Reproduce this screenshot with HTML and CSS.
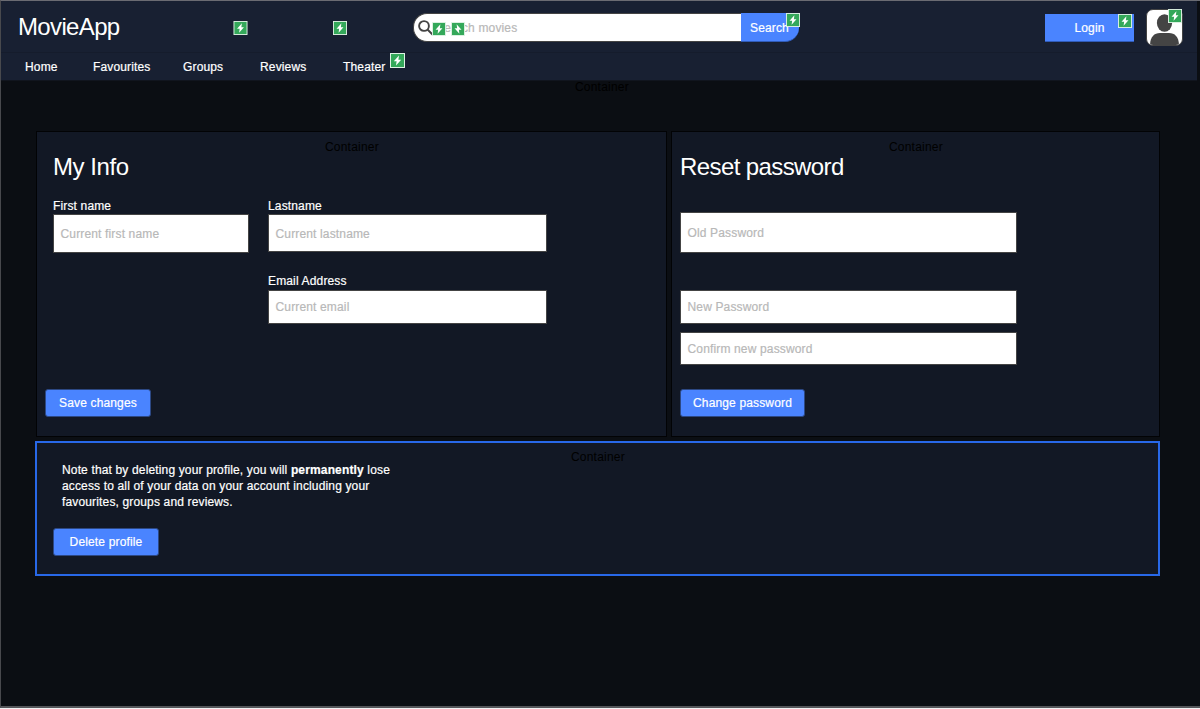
FILE: index.html
```html
<!DOCTYPE html>
<html lang="en">
<head>
<meta charset="utf-8">
<title>MovieApp</title>
<link rel="stylesheet" href="styles.css">
</head>
<body>
<svg class="defs" width="0" height="0">
  <symbol id="bolt" viewBox="0 0 15 15">
    <rect x="0.5" y="0.5" width="14" height="14" fill="#34a85a" stroke="#dff3e5"/>
    <path d="M9 2.4 3.8 8.2h2.8L6 12.6 11.2 6.8H8.4z" fill="#fff"/>
  </symbol>
</svg>
<div class="page">
  <header class="header">
    <div class="topbar">
      <div class="logo">MovieApp</div>
      <div class="search">
        <div class="search-field">
          <svg class="search-icon" viewBox="0 0 16 16"><circle cx="6" cy="6" r="4.9"/><path d="M9.5 9.5 15 15"/></svg>
          <span class="placeholder">Search movies</span>
          <svg class="badge b-field1"><use href="#bolt"/></svg>
          <svg class="badge b-field2"><use href="#bolt"/></svg>
        </div>
        <div class="search-button">Search<svg class="badge b-search"><use href="#bolt"/></svg></div>
      </div>
      <div class="login">Login<svg class="badge b-login"><use href="#bolt"/></svg></div>
      <div class="avatar">
        <svg viewBox="0 0 37 37" width="37" height="37">
          <defs><clipPath id="frame"><rect x="1" y="1" width="35" height="35" rx="6"/></clipPath></defs>
          <rect x="0.5" y="0.5" width="36" height="36" rx="6.5" fill="#fff" stroke="#444"/>
          <g clip-path="url(#frame)" fill="#444"><ellipse cx="18.5" cy="14" rx="7.6" ry="8.8"/><path d="M4 37c0-9 4-13 10-13h9c6 0 10 4 10 13z"/></g>
        </svg>
        <svg class="badge b-avatar"><use href="#bolt"/></svg>
      </div>
      <svg class="badge b-free1"><use href="#bolt"/></svg>
      <svg class="badge b-free2"><use href="#bolt"/></svg>
    </div>
    <nav class="nav">
      <a class="home">Home</a><a class="favourites">Favourites</a><a class="groups">Groups</a><a class="reviews">Reviews</a><a class="theater">Theater<svg class="badge b-theater"><use href="#bolt"/></svg></a>
    </nav>
  </header>
  <main class="main">
    <div class="tag tag-main">Container</div>
    <div class="panels">
      <section class="panel info">
        <div class="tag tag-info">Container</div>
        <h2>My Info</h2>
        <div class="columns">
          <div class="col-first">
            <label>First name</label>
            <div class="input h-first">Current first name</div>
          </div>
          <div class="col-last">
            <label>Lastname</label>
            <div class="input h-last">Current lastname</div>
            <label class="label-email">Email Address</label>
            <div class="input h-email">Current email</div>
          </div>
        </div>
        <div class="button save">Save changes</div>
      </section>
      <section class="panel reset">
        <div class="tag tag-reset">Container</div>
        <h2>Reset password</h2>
        <div class="input h-old">Old Password</div>
        <div class="input h-new">New Password</div>
        <div class="input h-confirm">Confirm new password</div>
        <div class="button change">Change password</div>
      </section>
    </div>
    <section class="danger">
      <div class="tag tag-danger">Container</div>
      <p>Note that by deleting your profile, you will <b>permanently</b> lose<br>access to all of your data on your account including your<br>favourites, groups and reviews.</p>
      <div class="button delete">Delete profile</div>
    </section>
  </main>
</div>
</body>
</html>
```
FILE: styles.css
```css
* { box-sizing: border-box; }
body { margin: 0; background: #f1f1f3; font: 12px/16px "Liberation Sans", Arial, sans-serif; color: #fff; letter-spacing: 0.15px; -webkit-text-stroke: 0.2px; overflow: hidden; }
.defs { position: absolute; }
.page { height: 708px; border-left: 1px solid #48494d; border-top: 1px solid #6a6b72; border-bottom: 2px solid #55565a; background: #0b0e13; }
.header { width: 1196px; height: 80px; background: #182032; border-bottom: 1px solid #11151e; }
.topbar { position: relative; display: flex; height: 52px; border-bottom: 1px solid #151c2c; }
.logo { width: 412px; padding: 12px 0 0 17px; font-size: 24px; line-height: 28px; letter-spacing: -0.65px; -webkit-text-stroke: 0; }
.search { display: flex; width: 386px; height: 29px; margin-top: 12px; line-height: 28px; }
.search-field { position: relative; display: flex; width: 328px; padding-left: 22px; background: #fff; border: 1px solid #444; border-right: 0; border-radius: 14px 0 0 14px; color: #b8b8b8; }
.search-icon { position: absolute; left: 4px; top: 6px; width: 16px; height: 16px; fill: none; stroke: #444; stroke-width: 1.9; }
.search-button { position: relative; width: 58px; padding-left: 9px; line-height: 30px; background: #4a84ff; border-bottom: 1px solid #315cb8; border-radius: 0 0 14px 0; }
.login { position: relative; width: 89px; height: 28px; margin: 13px 0 0 246px; line-height: 28px; text-align: center; background: #4a84ff; border-bottom: 1px solid #315cb8; }
.avatar { position: relative; width: 37px; height: 37px; margin: 8px 0 0 12px; }
.badge { position: absolute; width: 14px; height: 14px; }
.b-field1 { left: 18px; top: 8px; }
.b-field2 { left: 37px; top: 8px; transform: scaleX(-1); }
.b-search { left: 45px; top: 0; }
.b-login { right: 2px; top: 0; }
.b-avatar { left: 22px; top: 0; }
.b-free1 { left: 232px; top: 20px; width: 15px; }
.b-free2 { left: 332px; top: 20px; }
.b-theater { left: 47px; top: -6px; width: 15px; height: 15px; }
.nav { display: flex; padding: 6px 0 0 24px; }
.nav a { position: relative; }
.home { width: 68px; }
.favourites { width: 90px; }
.groups { width: 77px; }
.reviews { width: 83px; }
.main { position: relative; padding: 50px 0 0 34px; }
.tag { position: absolute; color: #000; letter-spacing: 0.2px; -webkit-text-stroke: 0; }
.tag-main { left: 574px; top: -2px; }
.panels { display: flex; gap: 4px; height: 306px; padding-left: 1px; }
.panel { position: relative; background: #121825; border: 1px solid #020305; }
.info { width: 631px; padding: 21px 0 0 16px; }
.reset { width: 489px; padding: 21px 0 0 8px; }
.tag-info { left: 288px; top: 7px; }
.tag-reset { left: 217px; top: 7px; }
h2 { margin: 0; font-size: 24px; line-height: 28px; font-weight: 400; letter-spacing: -0.6px; -webkit-text-stroke: 0; }
.info h2 { letter-spacing: -0.45px; }
.columns { display: flex; gap: 19px; height: 191px; margin-top: 17px; }
.col-first { width: 196px; }
.col-last { width: 279px; }
label { display: block; height: 16px; }
.label-email { margin-top: 21px; height: 17px; }
.input { display: flex; align-items: center; padding-left: 6.5px; background: #fff; border: 1px solid #444; color: #b8b8b8; }
.h-first { height: 39px; }
.h-last { height: 38px; padding-top: 1px; }
.h-email { height: 34px; }
.h-old { width: 337px; height: 41px; margin-top: 31px; }
.h-new { width: 337px; height: 34px; margin-top: 37px; }
.h-confirm { width: 337px; height: 33px; margin-top: 8px; }
.button { display: flex; align-items: center; justify-content: center; width: 106px; height: 28px; background: #4a84ff; border: 1px solid #2c4884; border-radius: 3px; }
.save { margin-left: -8px; }
.change { width: 125px; margin-top: 24px; }
.danger { position: relative; width: 1125px; height: 135px; margin-top: 4px; padding: 19px 0 0 16px; background: #121825; border: 2px solid #2868e8; }
.tag-danger { left: 534px; top: 6px; }
.danger p { margin: 0 0 18px 9px; }
```
